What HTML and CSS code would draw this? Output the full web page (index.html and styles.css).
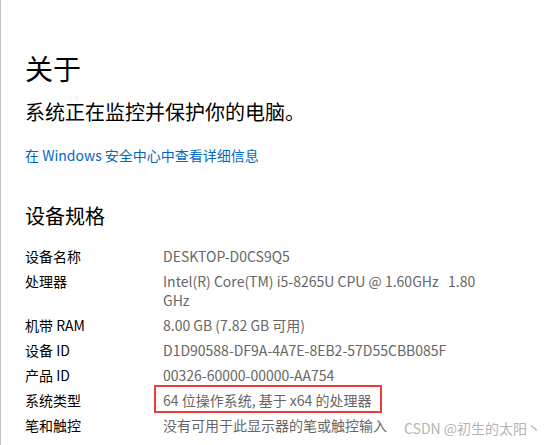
FILE: index.html
```html
<!DOCTYPE html>
<html lang="zh-CN">
<head>
    <meta charset="UTF-8">
    <meta name="viewport" content="width=device-width, initial-scale=1.0">
    <title>关于</title>
    <link rel="stylesheet" href="styles.css">
</head>
<body>
    <main class="about-page">
        <h1 class="page-title">关于</h1>
        <p class="protect-text">系统正在监控并保护你的电脑。</p>
        <a class="security-link" href="#">在 Windows 安全中心中查看详细信息</a>

        <h2 class="section-title">设备规格</h2>

        <dl class="spec-list">
            <div class="spec-row">
                <dt>设备名称</dt>
                <dd>DESKTOP-D0CS9Q5</dd>
            </div>
            <div class="spec-row">
                <dt>处理器</dt>
                <dd>Intel(R) Core(TM) i5-8265U CPU @ 1.60GHz&nbsp;&nbsp; 1.80<br>GHz</dd>
            </div>
            <div class="spec-row">
                <dt>机带 RAM</dt>
                <dd>8.00 GB (7.82 GB 可用)</dd>
            </div>
            <div class="spec-row">
                <dt>设备 ID</dt>
                <dd>D1D90588-DF9A-4A7E-8EB2-57D55CBB085F</dd>
            </div>
            <div class="spec-row">
                <dt>产品 ID</dt>
                <dd>00326-60000-00000-AA754</dd>
            </div>
            <div class="spec-row">
                <dt>系统类型</dt>
                <dd><span class="marked">64 位操作系统, 基于 x64 的处理器</span></dd>
            </div>
            <div class="spec-row">
                <dt>笔和触控</dt>
                <dd>没有可用于此显示器的笔或触控输入</dd>
            </div>
        </dl>
    </main>

    <div class="watermark">CSDN @初生的太阳丶</div>
</body>
</html>
```

FILE: styles.css
```css
body {
    margin: 0;
    min-height: 445px;
    border-left: 1px solid #c4c4c4;
    background-color: white;
    font-family: 'Noto Sans CJK SC', sans-serif;
    color: #000;
    position: relative;
    overflow: hidden;
}

.about-page {
    padding: 50px 0 0 24px;
}

.page-title {
    margin: 0;
    font-size: 28px;
    line-height: 36px;
    font-weight: normal;
}

.protect-text {
    margin: 12px 0 0;
    font-size: 20px;
    line-height: 28px;
}

.security-link {
    display: inline-block;
    margin-top: 19px;
    font-size: 14px;
    line-height: 20px;
    color: #0067c0;
    text-decoration: none;
}

.section-title {
    margin: 36px 0 0;
    font-size: 20px;
    line-height: 28px;
    font-weight: normal;
}

.spec-list {
    margin: 17px 0 0;
    font-size: 14px;
    line-height: 19px;
}

.spec-row {
    display: flex;
    margin-bottom: 6px;
}

.spec-row dt {
    width: 138px;
    flex-shrink: 0;
}

.spec-row dd {
    margin: 0;
    color: #666;
}

.marked {
    position: relative;
}

/* annotation box drawn over the value */
.marked::after {
    content: '';
    position: absolute;
    left: -9px;
    right: -10px;
    top: -5px;
    bottom: -3px;
    border: 2px solid #f03a3a;
}

.watermark {
    position: absolute;
    left: 403px;
    top: 419px;
    font-size: 14px;
    line-height: 19px;
    color: #b4b4b4;
}
```
